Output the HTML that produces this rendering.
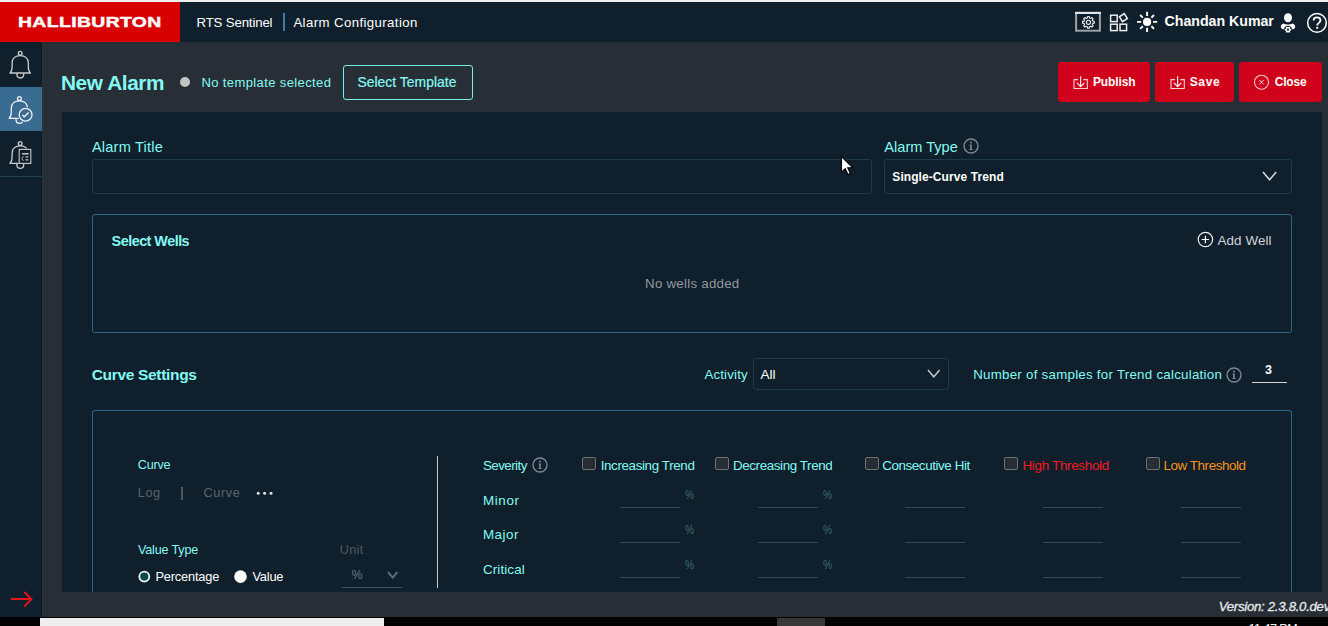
<!DOCTYPE html>
<html><head><meta charset="utf-8"><style>
html,body{margin:0;padding:0;width:1328px;height:626px;overflow:hidden;background:#272e36}
body{position:relative;font-family:"Liberation Sans",sans-serif}
.t{position:absolute;white-space:nowrap;line-height:1}
.r{position:absolute;box-sizing:border-box}
</style></head><body>
<div class="r" style="left:0px;top:0px;width:1328px;height:626px;background:#272e36"></div>
<div class="r" style="left:0px;top:0px;width:1328px;height:2px;background:#eef0f2"></div>
<div class="r" style="left:0px;top:2px;width:1328px;height:40px;background:#0f1f2b"></div>
<div class="r" style="left:0px;top:2px;width:180px;height:40px;background:#d80000"></div>
<div class="r" style="left:0px;top:42px;width:42px;height:575px;background:#0f1f2b"></div>
<div class="r" style="left:41px;top:42px;width:1px;height:575px;background:#0b1922"></div>
<div class="r" style="left:42px;top:42px;width:2px;height:575px;background:#26333b"></div>
<div class="r" style="left:0px;top:87px;width:42px;height:44px;background:#3a6b91"></div>
<div class="r" style="left:0px;top:176px;width:42px;height:1px;background:#223f58"></div>
<div class="r" style="left:62px;top:112px;width:1260px;height:480px;background:#0f1f2b"></div>
<div class="r" style="left:0px;top:617px;width:1328px;height:9px;background:#000"></div>
<div class="r" style="left:40px;top:618px;width:344px;height:8px;background:#eeeeee"></div>
<div class="r" style="left:777px;top:618px;width:48px;height:8px;background:#383838"></div>
<div class="r" style="left:283px;top:13px;width:2px;height:18px;background:#3d7aa8"></div>
<div class="r" style="left:180px;top:77px;width:10px;height:10px;background:#c4c4c4;border-radius:50%"></div>
<div class="r" style="left:343px;top:65px;width:130px;height:35px;border:1px solid #74f0ee;border-radius:3px"></div>
<div class="r" style="left:1058px;top:62px;width:92px;height:40px;background:#d0021b;border-radius:3px"></div>
<div class="r" style="left:1155px;top:62px;width:79px;height:40px;background:#d0021b;border-radius:3px"></div>
<div class="r" style="left:1239px;top:62px;width:83px;height:40px;background:#d0021b;border-radius:3px"></div>
<div class="r" style="left:92px;top:159px;width:780px;height:35px;border:1px solid #1d3a4c;border-radius:3px"></div>
<div class="r" style="left:884px;top:159px;width:408px;height:35px;border:1px solid #1d3a4c;border-radius:3px"></div>
<div class="r" style="left:92px;top:214px;width:1200px;height:119px;border:1px solid #2d6384;border-radius:3px"></div>
<div class="r" style="left:753px;top:358px;width:196px;height:32px;border:1px solid #1d3a4c;border-radius:3px"></div>
<div class="r" style="left:1252px;top:382px;width:35px;height:1px;background:#cfd3d6"></div>
<div class="r" style="left:92px;top:410px;width:1200px;height:182px;border:1px solid #2d6384;border-bottom:none;border-radius:3px 3px 0 0"></div>
<div class="r" style="left:181px;top:487px;width:1.6px;height:13px;background:#4f585f"></div>
<div class="r" style="left:437px;top:456px;width:1px;height:132px;background:#c8ccd0"></div>
<div class="r" style="left:342px;top:587px;width:60px;height:1px;background:#46515a"></div>
<div class="r" style="left:582px;top:457px;width:14px;height:13px;background:#272d33;border:1.3px solid #6d736f;border-radius:2px"></div>
<div class="r" style="left:715px;top:457px;width:14px;height:13px;background:#272d33;border:1.3px solid #6d736f;border-radius:2px"></div>
<div class="r" style="left:865px;top:457px;width:14px;height:13px;background:#272d33;border:1.3px solid #6d736f;border-radius:2px"></div>
<div class="r" style="left:1004px;top:457px;width:14px;height:13px;background:#272d33;border:1.3px solid #6d736f;border-radius:2px"></div>
<div class="r" style="left:1145.5px;top:457px;width:14px;height:13px;background:#272d33;border:1.3px solid #6d736f;border-radius:2px"></div>
<div class="r" style="left:620px;top:507px;width:60px;height:1px;background:#3b4750"></div>
<div class="r" style="left:758px;top:507px;width:60px;height:1px;background:#3b4750"></div>
<div class="r" style="left:905px;top:507px;width:60px;height:1px;background:#3b4750"></div>
<div class="r" style="left:1043px;top:507px;width:60px;height:1px;background:#3b4750"></div>
<div class="r" style="left:1181px;top:507px;width:60px;height:1px;background:#3b4750"></div>
<div class="r" style="left:620px;top:542px;width:60px;height:1px;background:#3b4750"></div>
<div class="r" style="left:758px;top:542px;width:60px;height:1px;background:#3b4750"></div>
<div class="r" style="left:905px;top:542px;width:60px;height:1px;background:#3b4750"></div>
<div class="r" style="left:1043px;top:542px;width:60px;height:1px;background:#3b4750"></div>
<div class="r" style="left:1181px;top:542px;width:60px;height:1px;background:#3b4750"></div>
<div class="r" style="left:620px;top:577px;width:60px;height:1px;background:#3b4750"></div>
<div class="r" style="left:758px;top:577px;width:60px;height:1px;background:#3b4750"></div>
<div class="r" style="left:905px;top:577px;width:60px;height:1px;background:#3b4750"></div>
<div class="r" style="left:1043px;top:577px;width:60px;height:1px;background:#3b4750"></div>
<div class="r" style="left:1181px;top:577px;width:60px;height:1px;background:#3b4750"></div>
<svg class="r" style="left:0px;top:0px;" width="42" height="180" viewBox="0 0 42 180"><g transform="translate(0,0)" fill="none" stroke="#c9cbcc" stroke-width="1.3" ><path d="M10 73 H30.4 C29 71.8 28.3 70 28.3 66.5 V63 C28.3 58.3 24.8 55.6 20.2 55.6 C15.6 55.6 12.1 58.3 12.1 63 V66.5 C12.1 70 11.4 71.8 10 73 Z" stroke-linejoin="round"/><circle cx="20.2" cy="53.2" r="1.9"/><path d="M16.9 73.2 V74.6 A3.4 3.4 0 0 0 23.7 74.6 V73.2"/></g><defs><clipPath id="cb"><path d="M0 0H42V180H0Z M25.6 114.8 m-7.8 0 a7.8 7.8 0 1 0 15.6 0 a7.8 7.8 0 1 0 -15.6 0Z" clip-rule="evenodd"/></clipPath><clipPath id="cd"><path d="M0 0H42V180H0Z M18.6 148.6 H31.6 V164.1 H18.6 Z" clip-rule="evenodd"/></clipPath></defs><g clip-path="url(#cb)"><g transform="translate(-0.8,45.3)" fill="none" stroke="#eef2f5" stroke-width="1.3" ><path d="M10 73 H30.4 C29 71.8 28.3 70 28.3 66.5 V63 C28.3 58.3 24.8 55.6 20.2 55.6 C15.6 55.6 12.1 58.3 12.1 63 V66.5 C12.1 70 11.4 71.8 10 73 Z" stroke-linejoin="round"/><circle cx="20.2" cy="53.2" r="1.9"/><path d="M16.9 73.2 V74.6 A3.4 3.4 0 0 0 23.7 74.6 V73.2"/></g></g><circle cx="25.6" cy="114.8" r="6.4" fill="none" stroke="#eef2f5" stroke-width="1.3"/><path d="M22.4 114.9 L24.3 116.7 L28.6 112.5" fill="none" stroke="#eef2f5" stroke-width="1.4"/><g clip-path="url(#cd)"><g transform="translate(0,90.3)" fill="none" stroke="#c9cbcc" stroke-width="1.3" ><path d="M10 73 H30.4 C29 71.8 28.3 70 28.3 66.5 V63 C28.3 58.3 24.8 55.6 20.2 55.6 C15.6 55.6 12.1 58.3 12.1 63 V66.5 C12.1 70 11.4 71.8 10 73 Z" stroke-linejoin="round"/><circle cx="20.2" cy="53.2" r="1.9"/><path d="M16.9 73.2 V74.6 A3.4 3.4 0 0 0 23.7 74.6 V73.2"/></g></g><rect x="19.2" y="149.4" width="11.6" height="14" fill="none" stroke="#c9cbcc" stroke-width="1.1"/><path d="M22 153.8 H28.6" stroke="#c9cbcc" stroke-width="1.5"/><path d="M23.6 156.4 A2.2 2.2 0 0 0 23.6 160.6" fill="none" stroke="#c9cbcc" stroke-width="0.9"/><path d="M25.6 156.9 H28.2 M25.6 159.9 H28.2" stroke="#c9cbcc" stroke-width="1.4"/></svg>
<svg class="r" style="left:0px;top:585px;" width="42" height="30" viewBox="0 0 42 30"><path d="M11 14 H31.5 M24.2 7 L31.5 14 L24.2 21.5" fill="none" stroke="#e8141c" stroke-width="1.8"/></svg>
<svg class="r" style="left:1070px;top:5px;" width="258" height="34" viewBox="0 0 258 34"><rect x="6.1" y="7.9" width="23.8" height="17.8" fill="none" stroke="#9ea2a6" stroke-width="2"/><path d="M5.1 7.9 H30.9" stroke="#e6e8ea" stroke-width="2"/><g transform="translate(18.4,17.3)" fill="none" stroke="#eceeef" stroke-width="1.1" stroke-linejoin="round"><path d="M4.37 -1.09 L5.83 -0.92 L5.83 0.92 L4.37 1.09 L3.86 2.31 L4.77 3.47 L3.47 4.77 L2.31 3.86 L1.09 4.37 L0.92 5.83 L-0.92 5.83 L-1.09 4.37 L-2.31 3.86 L-3.47 4.77 L-4.77 3.47 L-3.86 2.31 L-4.37 1.09 L-5.83 0.92 L-5.83 -0.92 L-4.37 -1.09 L-3.86 -2.31 L-4.77 -3.47 L-3.47 -4.77 L-2.31 -3.86 L-1.09 -4.37 L-0.92 -5.83 L0.92 -5.83 L1.09 -4.37 L2.31 -3.86 L3.47 -4.77 L4.77 -3.47 L3.86 -2.31Z"/><circle r="2.1"/></g><g fill="none" stroke="#eceeef" stroke-width="1.5"><rect x="40.6" y="10.2" width="6.6" height="6.4"/><rect x="40.6" y="19.2" width="6.6" height="6.4"/><rect x="50" y="19.2" width="6.6" height="6.4"/><rect x="50.5" y="9.7" width="5.8" height="5.8" transform="rotate(-33 53.4 12.6)"/></g><circle cx="77.1" cy="16.9" r="4.1" fill="#fff"/><g stroke="#fff" stroke-width="1.9"><path d="M83.00 16.90 L87.20 16.90 M81.41 21.21 L84.03 23.83 M77.10 22.80 L77.10 27.00 M72.79 21.21 L70.17 23.83 M71.20 16.90 L67.00 16.90 M72.79 12.59 L70.17 9.97 M77.10 11.00 L77.10 6.80 M81.41 12.59 L84.03 9.97"/></g><ellipse cx="218" cy="12.8" rx="4" ry="4.5" fill="#fff"/><path d="M213.6 18.4 C211.8 18.8 210.8 20.2 210.8 21.8 C210.8 23.4 211.8 24.2 213.4 24.2 H222.6 C224.2 24.2 225.2 23.4 225.2 21.8 C225.2 20.2 224.2 18.8 222.4 18.4 C221 19.2 219.6 19.5 218 19.5 C216.4 19.5 215 19.2 213.6 18.4Z" fill="#fff"/><g transform="translate(218,24.7)"><circle r="4" fill="#0f1f2b"/><path d="M2.37 -0.80 L3.23 -0.69 L3.23 0.69 L2.37 0.80 L1.88 1.65 L2.21 2.45 L1.02 3.14 L0.49 2.45 L-0.49 2.45 L-1.02 3.14 L-2.21 2.45 L-1.88 1.65 L-2.37 0.80 L-3.23 0.69 L-3.23 -0.69 L-2.37 -0.80 L-1.88 -1.65 L-2.21 -2.45 L-1.02 -3.14 L-0.49 -2.45 L0.49 -2.45 L1.02 -3.14 L2.21 -2.45 L1.88 -1.65Z" fill="#fff"/><circle r="1.1" fill="#0f1f2b"/></g><circle cx="247" cy="17.9" r="9.3" fill="none" stroke="#fff" stroke-width="1.5"/><path d="M243.6 15.6 C243.6 13.5 245.1 12.4 247 12.4 C249 12.4 250.5 13.6 250.5 15.3 C250.5 17.8 247.2 17.9 247.2 20.5" fill="none" stroke="#fff" stroke-width="1.8"/><circle cx="247.2" cy="22.8" r="1.15" fill="#fff"/></svg>
<svg class="r" style="left:1060px;top:64px;" width="260" height="36" viewBox="0 0 260 36"><g transform="translate(13.4,0)" fill="none" stroke="#f4d0d4" stroke-width="1.1"><path d="M4.6 15.6 H0.6 V24.5 H13.9 V15.6 H9.9"/><path d="M7.25 12.2 V22.6 M3.6 18.9 L7.25 22.6 L10.9 18.9" stroke="#fff"/></g><g transform="translate(110.4,0)" fill="none" stroke="#f4d0d4" stroke-width="1.1"><path d="M4.6 15.6 H0.6 V24.5 H13.9 V15.6 H9.9"/><path d="M7.25 12.2 V22.6 M3.6 18.9 L7.25 22.6 L10.9 18.9" stroke="#fff"/></g><circle cx="201.5" cy="18.2" r="7" fill="none" stroke="#f2c8cd" stroke-width="1.1"/><path d="M199.3 16 L203.7 20.4 M203.7 16 L199.3 20.4" stroke="#f6dade" stroke-width="1"/></svg>
<svg class="r" style="left:961.5px;top:137.4px" width="18" height="18" viewBox="0 0 18 18"><circle cx="9" cy="9" r="7.0" fill="none" stroke="#7d8893" stroke-width="1.4"/><circle cx="9" cy="5.4" r="1" fill="#7d8893"/><path d="M7.4 7.6 H9.8 V12.2 H10.8 V13 H7.2 V12.2 H8.2 V8.4 H7.4Z" fill="#7d8893"/></svg>
<svg class="r" style="left:1225.3px;top:365.8px" width="18" height="18" viewBox="0 0 18 18"><circle cx="9" cy="9" r="7.0" fill="none" stroke="#7d8893" stroke-width="1.4"/><circle cx="9" cy="5.4" r="1" fill="#7d8893"/><path d="M7.4 7.6 H9.8 V12.2 H10.8 V13 H7.2 V12.2 H8.2 V8.4 H7.4Z" fill="#7d8893"/></svg>
<svg class="r" style="left:531.4px;top:455.5px" width="18" height="18" viewBox="0 0 18 18"><circle cx="9" cy="9" r="7.0" fill="none" stroke="#7d8893" stroke-width="1.4"/><circle cx="9" cy="5.4" r="1" fill="#7d8893"/><path d="M7.4 7.6 H9.8 V12.2 H10.8 V13 H7.2 V12.2 H8.2 V8.4 H7.4Z" fill="#7d8893"/></svg>
<svg class="r" style="left:1261px;top:170.4px;" width="17.2" height="11.8" viewBox="0 0 17.2 11.8"><path d="M2 2 L8.6 9.8 L15.2 2" fill="none" stroke="#d9dbdd" stroke-width="1.5"/></svg>
<svg class="r" style="left:926.2px;top:367.8px;" width="15.6" height="10.8" viewBox="0 0 15.6 10.8"><path d="M2 2 L7.8 8.8 L13.6 2" fill="none" stroke="#c8cbce" stroke-width="1.4"/></svg>
<svg class="r" style="left:386.2px;top:570.4px;" width="13.4" height="9.6" viewBox="0 0 13.4 9.6"><path d="M2 2 L6.7 7.6 L11.4 2" fill="none" stroke="#5d6870" stroke-width="2"/></svg>
<svg class="r" style="left:1196px;top:230px;" width="20" height="20" viewBox="0 0 20 20"><circle cx="9.4" cy="9.5" r="7.2" fill="none" stroke="#f0f2f3" stroke-width="1.2"/><path d="M9.4 5.8 V13.2 M5.7 9.5 H13.1" stroke="#fff" stroke-width="1.2"/></svg>
<svg class="r" style="left:254px;top:489px;" width="22" height="8" viewBox="0 0 22 8"><circle cx="4.2" cy="4.2" r="1.5" fill="#dde0e2"/><circle cx="10.6" cy="4.2" r="1.5" fill="#dde0e2"/><circle cx="17" cy="4.2" r="1.5" fill="#dde0e2"/></svg>
<svg class="r" style="left:136px;top:568px;" width="16" height="16" viewBox="0 0 16 16"><circle cx="8.3" cy="8.6" r="5.0" fill="#0b4a50" stroke="#f0f2f2" stroke-width="1.8"/></svg>
<svg class="r" style="left:232px;top:568px;" width="16" height="16" viewBox="0 0 16 16"><circle cx="8.5" cy="8.6" r="6.3" fill="#fff"/></svg>
<svg class="r" style="left:840px;top:155px;" width="16" height="22" viewBox="0 0 16 22"><path d="M1.4 1.5 V17.2 L5.2 13.6 L8 19.6 L10.4 18.6 L7.7 12.7 L12.6 12.7 Z" fill="#fff" stroke="#000" stroke-width="1.1" stroke-linejoin="miter"/></svg>
<div class="t" style="left:17.70px;top:15.46px;font-size:14.6px;color:#fff;font-weight:700;transform:scaleX(1.325);transform-origin:0 0;letter-spacing:0.3px;-webkit-text-stroke:0.45px #fff">HALLIBURTON</div>
<div class="t" style="left:196.50px;top:16.35px;font-size:13.2px;color:#fff;font-weight:400;letter-spacing:-0.128px;">RTS Sentinel</div>
<div class="t" style="left:293.40px;top:16.25px;font-size:13.2px;color:#fff;font-weight:400;letter-spacing:0.411px;">Alarm Configuration</div>
<div class="t" style="left:1164.60px;top:14.40px;font-size:14.2px;color:#fff;font-weight:700;letter-spacing:-0.025px;">Chandan Kumar</div>
<div class="t" style="left:61.00px;top:73.42px;font-size:20.8px;color:#84faf4;font-weight:700;letter-spacing:-0.4px;">New Alarm</div>
<div class="t" style="left:201.40px;top:76.42px;font-size:13.0px;color:#84faf4;font-weight:400;letter-spacing:0.389px;">No template selected</div>
<div class="t" style="left:357.40px;top:75.59px;font-size:13.86px;color:#84faf4;font-weight:400;letter-spacing:0.05px;-webkit-text-stroke:0.2px #84faf4">Select Template</div>
<div class="t" style="left:1092.90px;top:76.16px;font-size:12.0px;color:#fff;font-weight:700;letter-spacing:-0.1px;">Publish</div>
<div class="t" style="left:1189.70px;top:76.16px;font-size:12.0px;color:#fff;font-weight:700;letter-spacing:0.633px;">Save</div>
<div class="t" style="left:1274.70px;top:76.16px;font-size:12.0px;color:#fff;font-weight:700;letter-spacing:-0.2px;">Close</div>
<div class="t" style="left:91.90px;top:139.86px;font-size:14.6px;color:#84faf4;font-weight:400;letter-spacing:0.2px;">Alarm Title</div>
<div class="t" style="left:884.30px;top:139.86px;font-size:14.6px;color:#84faf4;font-weight:400;letter-spacing:0.0px;">Alarm Type</div>
<div class="t" style="left:892.30px;top:170.86px;font-size:12.0px;color:#fff;font-weight:700;letter-spacing:0.082px;">Single-Curve Trend</div>
<div class="t" style="left:111.60px;top:234.13px;font-size:14.4px;color:#84faf4;font-weight:700;letter-spacing:-0.518px;">Select Wells</div>
<div class="t" style="left:1217.40px;top:233.78px;font-size:13.4px;color:#d0d4d8;font-weight:400;letter-spacing:0.115px;">Add Well</div>
<div class="t" style="left:645.10px;top:277.27px;font-size:13.29px;color:#9299a0;font-weight:400;letter-spacing:0.254px;">No wells added</div>
<div class="t" style="left:91.70px;top:367.40px;font-size:15.5px;color:#84faf4;font-weight:700;letter-spacing:-0.316px;">Curve Settings</div>
<div class="t" style="left:704.40px;top:368.26px;font-size:13.3px;color:#84faf4;font-weight:400;letter-spacing:0.171px;">Activity</div>
<div class="t" style="left:760.60px;top:368.09px;font-size:13.5px;color:#fff;font-weight:400;letter-spacing:-0.1px;">All</div>
<div class="t" style="left:973.20px;top:368.16px;font-size:13.3px;color:#84faf4;font-weight:400;letter-spacing:0.261px;">Number of samples for Trend calculation</div>
<div class="t" style="left:1265.00px;top:363.94px;font-size:12.5px;color:#fff;font-weight:700;">3</div>
<div class="t" style="left:137.80px;top:458.85px;font-size:12.6px;color:#84faf4;font-weight:400;letter-spacing:-0.2px;">Curve</div>
<div class="t" style="left:137.80px;top:486.58px;font-size:12.8px;color:#5b646b;font-weight:400;letter-spacing:0.5px;">Log</div>
<div class="t" style="left:203.50px;top:486.58px;font-size:12.8px;color:#5b646b;font-weight:400;letter-spacing:0.55px;">Curve</div>
<div class="t" style="left:137.90px;top:543.85px;font-size:12.6px;color:#84faf4;font-weight:400;letter-spacing:-0.156px;">Value Type</div>
<div class="t" style="left:339.80px;top:543.85px;font-size:12.6px;color:#4f5961;font-weight:400;letter-spacing:0.333px;">Unit</div>
<div class="t" style="left:155.40px;top:570.58px;font-size:12.8px;color:#fff;font-weight:400;letter-spacing:-0.167px;">Percentage</div>
<div class="t" style="left:252.40px;top:570.58px;font-size:12.8px;color:#fff;font-weight:400;letter-spacing:-0.175px;">Value</div>
<div class="t" style="left:351.70px;top:569.26px;font-size:12.0px;color:#6a7e88;font-weight:400;">%</div>
<div class="t" style="left:482.90px;top:458.78px;font-size:13.4px;color:#84faf4;font-weight:400;letter-spacing:-0.557px;">Severity</div>
<div class="t" style="left:600.70px;top:458.78px;font-size:13.4px;color:#84faf4;font-weight:400;letter-spacing:-0.373px;">Increasing Trend</div>
<div class="t" style="left:733.00px;top:458.78px;font-size:13.4px;color:#84faf4;font-weight:400;letter-spacing:-0.4px;">Decreasing Trend</div>
<div class="t" style="left:882.20px;top:458.78px;font-size:13.4px;color:#84faf4;font-weight:400;letter-spacing:-0.407px;">Consecutive Hit</div>
<div class="t" style="left:1022.50px;top:458.78px;font-size:13.4px;color:#f01c24;font-weight:400;letter-spacing:-0.3px;">High Threshold</div>
<div class="t" style="left:1163.50px;top:458.78px;font-size:13.4px;color:#f7941d;font-weight:400;letter-spacing:-0.425px;">Low Threshold</div>
<div class="t" style="left:482.90px;top:493.58px;font-size:13.4px;color:#84faf4;font-weight:400;letter-spacing:0.65px;">Minor</div>
<div class="t" style="left:482.90px;top:528.38px;font-size:13.4px;color:#84faf4;font-weight:400;letter-spacing:0.525px;">Major</div>
<div class="t" style="left:482.90px;top:563.28px;font-size:13.4px;color:#84faf4;font-weight:400;letter-spacing:0.129px;">Critical</div>
<div class="t" style="left:684.80px;top:488.98px;font-size:12.8px;color:#3e6e74;font-weight:400;transform:scaleX(0.8);transform-origin:0 0">%</div>
<div class="t" style="left:823.00px;top:488.98px;font-size:12.8px;color:#3e6e74;font-weight:400;transform:scaleX(0.8);transform-origin:0 0">%</div>
<div class="t" style="left:684.80px;top:523.98px;font-size:12.8px;color:#3e6e74;font-weight:400;transform:scaleX(0.8);transform-origin:0 0">%</div>
<div class="t" style="left:823.00px;top:523.98px;font-size:12.8px;color:#3e6e74;font-weight:400;transform:scaleX(0.8);transform-origin:0 0">%</div>
<div class="t" style="left:684.80px;top:558.98px;font-size:12.8px;color:#3e6e74;font-weight:400;transform:scaleX(0.8);transform-origin:0 0">%</div>
<div class="t" style="left:823.00px;top:558.98px;font-size:12.8px;color:#3e6e74;font-weight:400;transform:scaleX(0.8);transform-origin:0 0">%</div>
<div class="t" style="left:1218.80px;top:600.35px;font-size:13.2px;color:#e6e8ea;font-weight:400;letter-spacing:-0.283px;font-style:italic;-webkit-text-stroke:0.3px #e6e8ea">Version: 2.3.8.0.dev</div>
<div class="t" style="left:1248.60px;top:622.94px;font-size:12.5px;color:#ffffff;font-weight:400;letter-spacing:-0.515px;">11:47 PM</div>
</body></html>
